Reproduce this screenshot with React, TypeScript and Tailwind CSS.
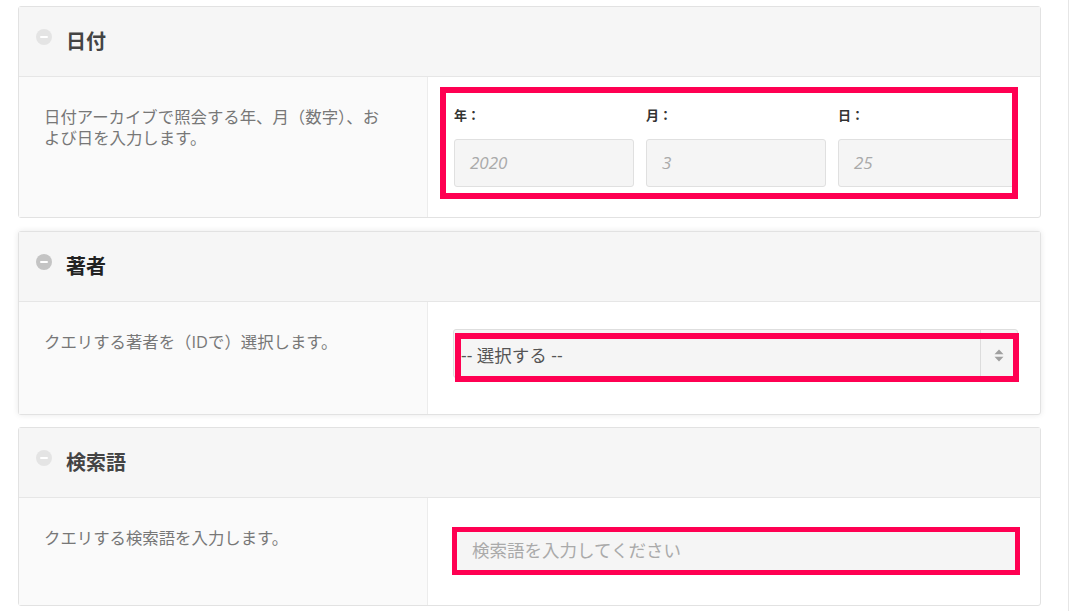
import React from 'react';

const font = "font-['Open_Sans','Noto_Sans_CJK_JP',sans-serif]";

const MinusIcon: React.FC<{ active?: boolean }> = ({ active }) => (
  <span
    className={`mb-[9px] flex h-[16px] w-[16px] items-center justify-center rounded-full ${
      active ? 'bg-[#c4c4c4]' : 'bg-[#e4e4e4]'
    }`}
  >
    <span className="h-[2px] w-[8px] rounded-sm bg-white" />
  </span>
);

const Panel: React.FC<{
  title: string;
  active?: boolean;
  description: React.ReactNode;
  children: React.ReactNode;
  rightClass: string;
  className?: string;
}> = ({ title, active, description, children, rightClass, className = '' }) => (
  <div
    className={`rounded-[3px] border border-[#e2e2e2] bg-white ${
      active ? 'shadow-[0_0_6px_rgba(0,0,0,0.09)]' : ''
    } ${className}`}
  >
    <div className="flex h-[70px] items-center gap-[14px] border-b border-[#e6e6e6] bg-[#f6f6f6] pl-[17px]">
      <MinusIcon active={active} />
      <h2 className={`text-[20px] font-bold ${active ? 'text-[#222]' : 'text-[#444]'}`}>{title}</h2>
    </div>
    <div className="flex">
      <div className="w-[409px] shrink-0 border-r border-[#ececec] bg-[#fafafa] pt-[29px] pl-[25px] pr-[12px] text-[16.4px] leading-[21px] text-[#777]">
        {description}
      </div>
      <div className={`flex-1 pr-[22px] ${rightClass}`}>{children}</div>
    </div>
  </div>
);

const DateField: React.FC<{ label: string; value: string }> = ({ label, value }) => (
  <div className="flex flex-col">
    <span className="mb-[14px] h-[20px] text-[13px] font-bold leading-[20px] text-[#333]">{label}：</span>
    <div className="flex h-[48px] items-center rounded-[3px] border border-[#e0e0e0] bg-[#f5f5f5] pl-[15px] text-[17px] italic text-[#aaa]">
      {value}
    </div>
  </div>
);

const App: React.FC = () => {
  return (
    <div className={`flex min-h-[611px] bg-white ${font}`}>
      <div className="flex w-[1068px] flex-col gap-[12px] pt-[6px] pl-[18px] pr-[27px]">
        <Panel
          title="日付"
          className="mb-[1px]"
          description={
            <>
              日付アーカイブで照会する年、月（数字）、お
              <br />
              よび日を入力します。
            </>
          }
          rightClass="pl-[26px] pt-[28px] pb-[30px]"
        >
          <div className="relative">
            <div className="grid grid-cols-3 gap-[12px]">
              <DateField label="年" value="2020" />
              <DateField label="月" value="3" />
              <DateField label="日" value="25" />
            </div>
            <div className="pointer-events-none absolute -top-[18px] -bottom-[12px] -left-[14px] right-0 border-[6px] border-[#ff0052]" />
          </div>
        </Panel>

        <Panel
          title="著者"
          active
          description="クエリする著者を（IDで）選択します。"
          rightClass="pl-[25px] pt-[27px] pb-[36px]"
        >
          <div className="relative">
            <div className="flex h-[49px] items-stretch rounded-[3px] border border-[#dedede] bg-[#f5f5f5]">
              <span className="flex flex-1 items-center pt-[3px] pl-[7px] text-[17.5px] text-[#555]">-- 選択する --</span>
              <span className="flex w-[37px] items-center justify-center border-l border-[#dcdcdc] pt-[4px]">
                <svg width="10" height="13" viewBox="0 0 10 13">
                  <path d="M5 0.5 L9.5 5.2 L0.5 5.2 Z" fill="#a0a0a0" />
                  <path d="M5 12.5 L9.5 7.8 L0.5 7.8 Z" fill="#a0a0a0" />
                </svg>
              </span>
            </div>
            <div className="pointer-events-none absolute top-[4px] -bottom-[4px] left-[2px] -right-[1px] border-[6px] border-[#ff0052]" />
          </div>
        </Panel>

        <Panel
          title="検索語"
          description="クエリする検索語を入力します。"
          rightClass="pl-[25px] pt-[29px] pb-[32px]"
        >
          <div className="relative">
            <div className="flex h-[46px] items-center rounded-[2px] border border-[#e0e0e0] bg-[#f5f5f5] pl-[18px] text-[17.5px] text-[#aaa]">
              検索語を入力してください
            </div>
            <div className="pointer-events-none absolute top-0 -bottom-[2px] -left-[1px] -right-[2px] border-[5px] border-[#ff0052]" />
          </div>
        </Panel>
      </div>
      <div className="w-px bg-[#e6e6e6]" />
    </div>
  );
};

export default App;
